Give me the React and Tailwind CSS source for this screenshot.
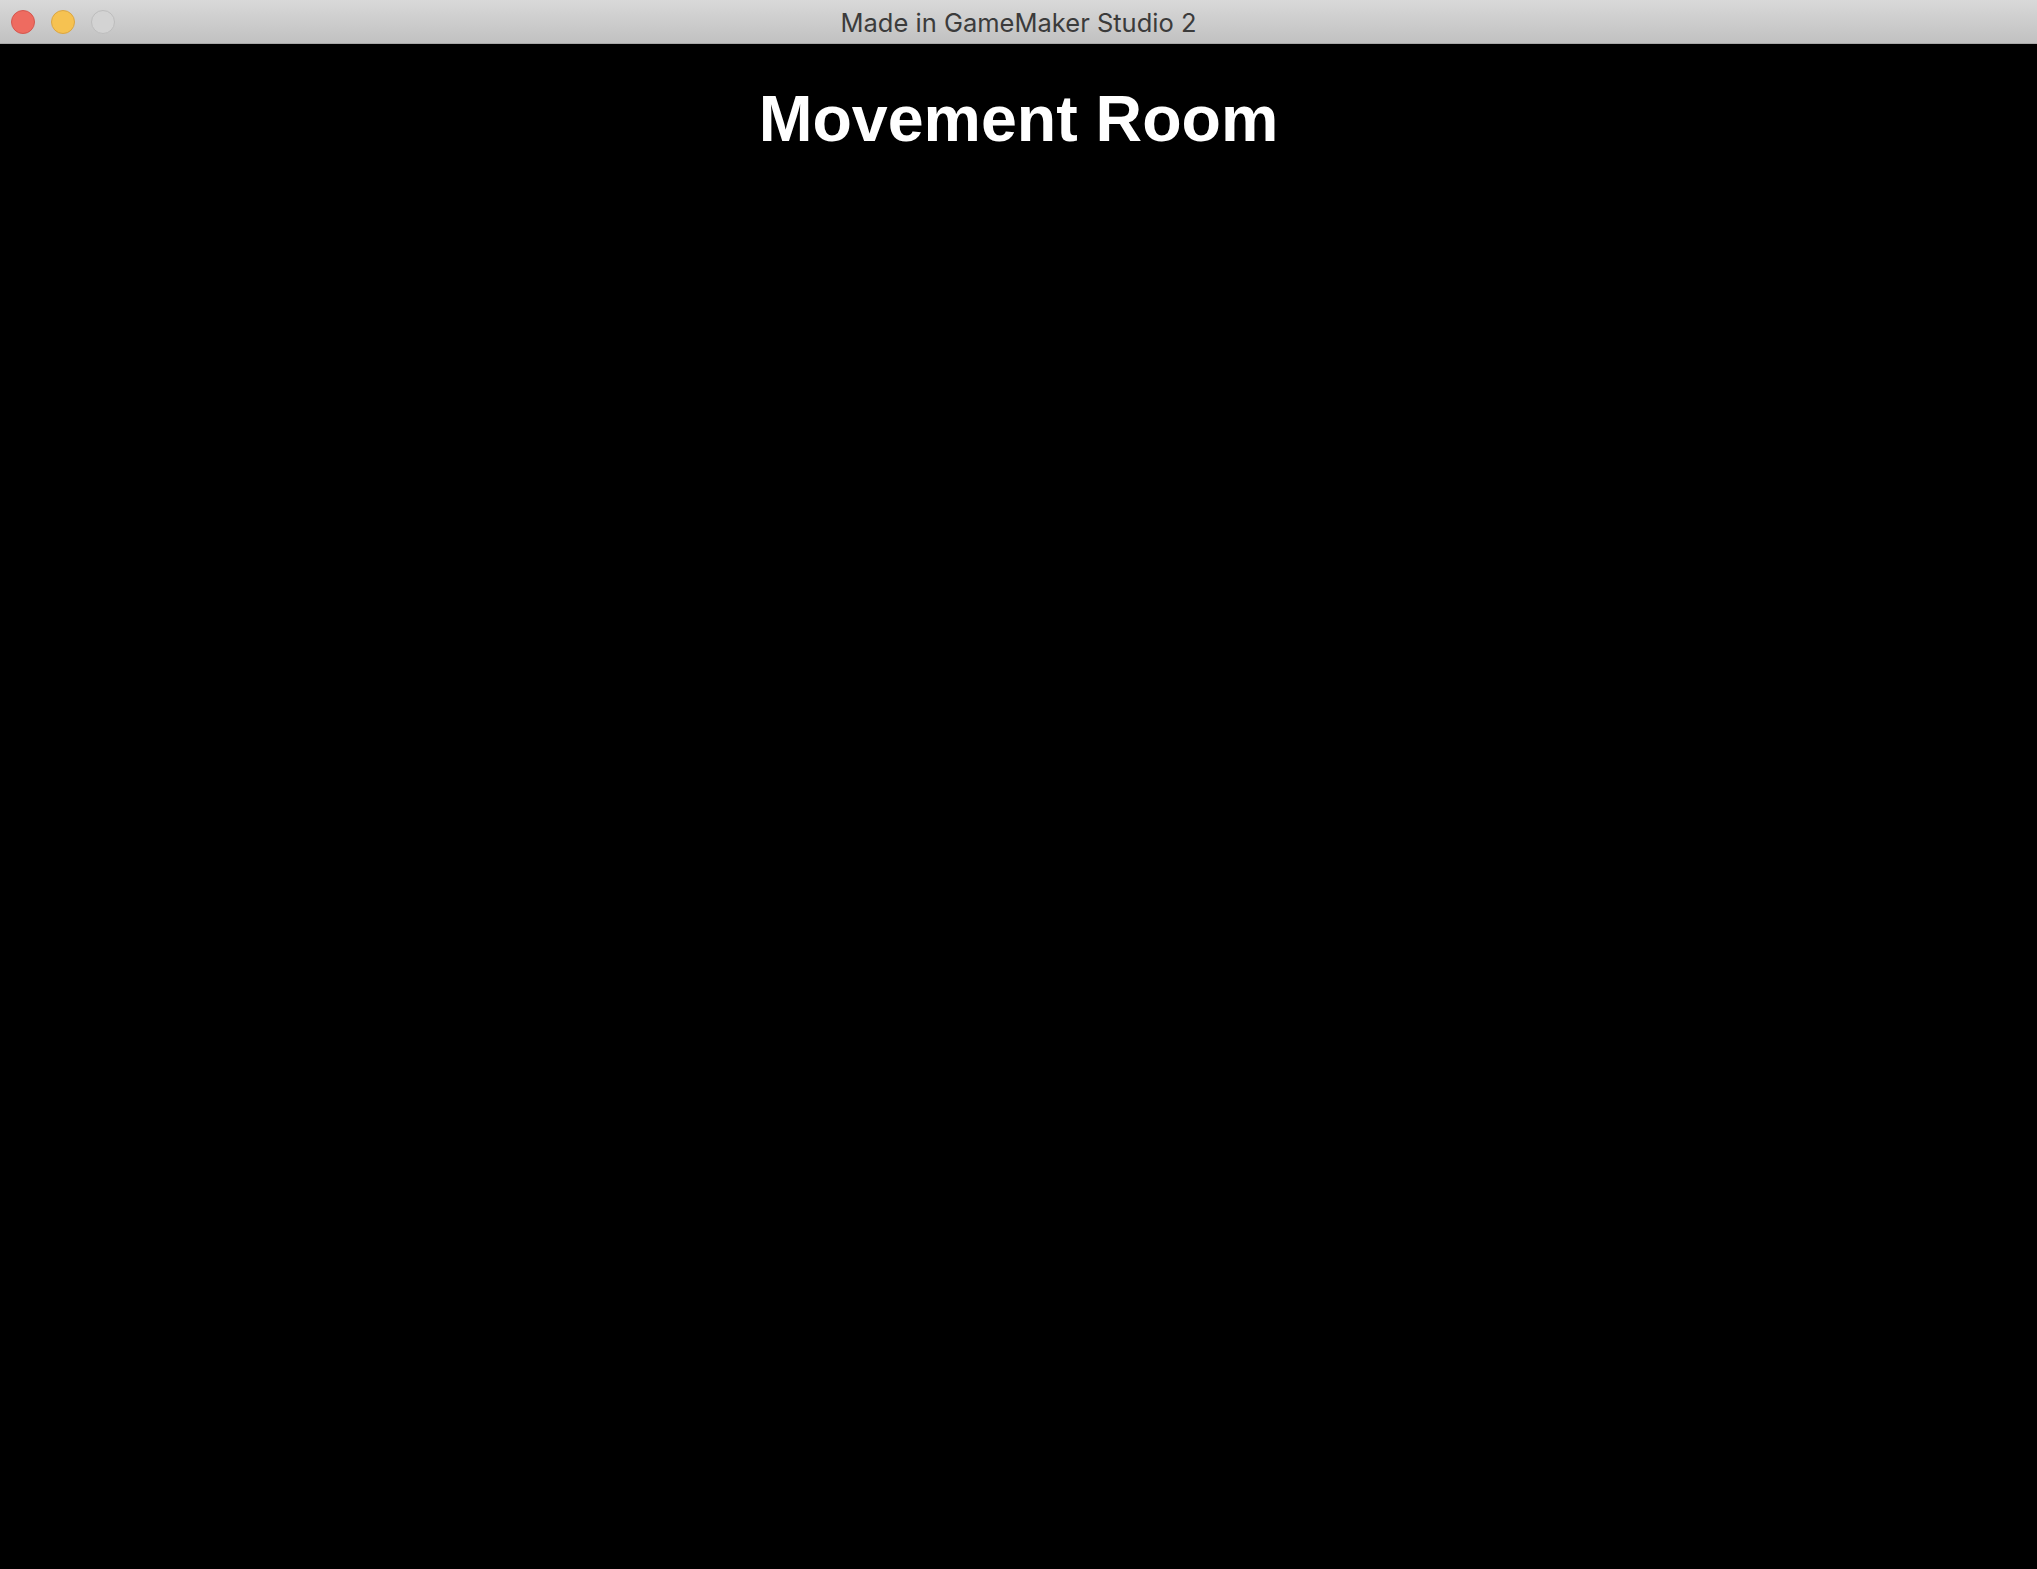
export default function App() {
  return (
    <div className="w-[2037px] h-[1569px] bg-black flex flex-col overflow-hidden">
      <div className="relative h-[44px] shrink-0 bg-gradient-to-b from-[#d9d9d9] to-[#c1c1c1] border-b border-[#a9a9a9] flex items-center justify-center">
        <div className="absolute left-[11px] top-[10px] flex gap-[16px]">
          <div className="w-[24px] h-[24px] rounded-full bg-[#ee6b60] border border-[#d5574e]" />
          <div className="w-[24px] h-[24px] rounded-full bg-[#f6c251] border border-[#dba643]" />
          <div className="w-[24px] h-[24px] rounded-full bg-[#d3d3d3] border border-[#bdbdbd]" />
        </div>
        <span className="text-[25.5px] text-[#3b3b3b] font-['Inter',sans-serif] leading-none pt-[2px]">Made in GameMaker Studio 2</span>
      </div>
      <div className="flex-1 flex justify-center pt-[43px]">
        <h1 className="text-[64.5px] font-bold text-white font-['Liberation_Sans',Arial,sans-serif] leading-none">Movement Room</h1>
      </div>
    </div>
  );
}
